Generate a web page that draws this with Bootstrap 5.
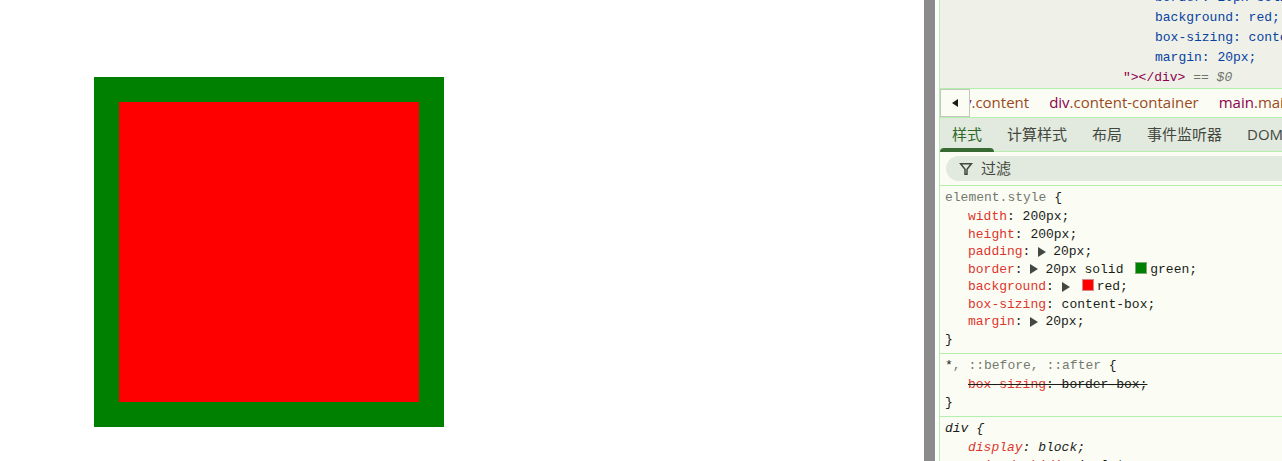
<!DOCTYPE html>
<html lang="zh-CN">
<head>
<meta charset="utf-8">
<meta name="viewport" content="width=device-width, initial-scale=1">
<title>box-sizing</title>
<link href="https://cdn.jsdelivr.net/npm/bootstrap@5.3.0/dist/css/bootstrap.min.css" rel="stylesheet">
<style>
  :root { --line: #b4efae; --panel: #fbfdf5; --tint: #e2e9de; --prop: #dc362e; --tag: #8e004b; --ink: #1a1c18; }
  body { font-family: "Open Sans", "Noto Sans CJK SC", sans-serif; font-size: 15px; }
  .page-view { padding: 77px 94px; }
  .demo-box { width: 350px; height: 350px; background: red; border: 25px solid green; }
  .splitter { width: 11px; background: #8b8b8b; margin-right: 4px; }
  .devtools { width: 343px; background: var(--panel); border-left: 1px solid var(--line); color: var(--ink); }
  .mono { font-family: "Liberation Mono", "Noto Sans CJK SC", monospace; font-size: 13px; white-space: nowrap; }
  .source { height: 88px; background: #eff1e9; color: #0842a0; line-height: 20px; }
  .source .attr-lines { padding-left: 215px; }
  .source .close-line { padding-left: 183px; color: var(--tag); }
  .source i { color: #6f746c; }
  .strip { border-top: 1px solid var(--line); height: 29px; }
  .strip a { color: #9a4a1c; white-space: nowrap; }
  .strip a span { color: var(--tag); }
  .scroll-btn { width: 30px; height: 28px; background: var(--panel); border: 1px solid #c3c8be; z-index: 1; }
  .crumbs { gap: 20px; margin-left: -19px; padding-bottom: 2px; }
  .tab-bar { height: 35px; background: var(--tint); border-top: 1px solid var(--line); border-bottom: 1px solid var(--line); }
  .tab-bar button { padding: 0 12px; color: #43483f; white-space: nowrap; line-height: 33px; }
  .tab-bar { gap: 1px; }
  .tab-bar button.active { color: #2f6a2b; position: relative; }
  .tab-bar button.active::after { content: ""; position: absolute; left: 0; right: 0; bottom: -1px; height: 4px; background: #386a33; border-radius: 4px 4px 0 0; }
  .filter-row { height: 33px; padding: 4px 0 4px 6px; }
  .filter-box { background: var(--tint); border-radius: 13px 0 0 13px; padding-left: 13px; gap: 8px; }
  .filter-box input { color: #43483f; outline: 0; min-width: 0; }
  .filter-box input::placeholder { color: #43483f; opacity: 1; }
  .rule { border-top: 1px solid var(--line); padding: 2px 0 4px 5px; }
  .selector { line-height: 20px; }
  .dim { color: #74796f; }
  .decls { padding-left: 23px; line-height: 18px; }
  .decls.full { display: grid; height: 123px; grid-template-rows: repeat(7, minmax(0, 1fr)); }
  .decls b { font-weight: 400; color: var(--prop); }
  .brace { line-height: 18px; }
  .tri { width: 8px; height: 10px; margin-right: 7px; fill: #444843; }
  .swatch { display: inline-block; width: 12px; height: 12px; vertical-align: -1px; margin: 0 3px 0 4px; border: 1px solid #8a9e86; }
  .swatch.is-red { background: red; border-color: #d98a86; margin-left: 5px; }
  .swatch.is-green { background: green; border-color: #7fa97a; }
</style>
</head>
<body>
<div class="d-flex vh-100 overflow-hidden">
  <main class="page-view flex-grow-1 bg-white"><div class="demo-box"></div></main>
  <div class="splitter flex-shrink-0"></div>
  <aside class="devtools flex-shrink-0 d-flex flex-column overflow-hidden">
    <div class="source mono d-flex flex-column justify-content-end overflow-hidden flex-shrink-0">
      <div class="attr-lines">border: 20px solid green;</div>
      <div class="attr-lines">background: red;</div>
      <div class="attr-lines">box-sizing: content-box;</div>
      <div class="attr-lines">margin: 20px;</div>
      <div class="close-line">"&gt;&lt;/div&gt; <i>== $0</i></div>
    </div>
    <nav class="strip d-flex flex-shrink-0 align-items-center" aria-label="DOM">
      <button class="scroll-btn p-0 d-flex flex-shrink-0 align-items-center justify-content-center" type="button" aria-label="向左滚动"><svg width="6" height="8" viewBox="0 0 6 8"><path d="M6 0v8L0 4z" fill="#1a1c18"/></svg></button>
      <div class="crumbs d-flex">
        <a class="text-decoration-none" href="#"><span>div</span>.content</a>
        <a class="text-decoration-none" href="#"><span>div</span>.content-container</a>
        <a class="text-decoration-none" href="#"><span>main</span>.main</a>
      </div>
    </nav>
    <div class="tab-bar d-flex flex-shrink-0" role="tablist">
      <button class="active border-0 bg-transparent" type="button" role="tab">样式</button>
      <button class="border-0 bg-transparent" type="button" role="tab">计算样式</button>
      <button class="border-0 bg-transparent" type="button" role="tab">布局</button>
      <button class="border-0 bg-transparent" type="button" role="tab">事件监听器</button>
      <button class="border-0 bg-transparent" type="button" role="tab">DOM 断点</button>
    </div>
    <div class="filter-row flex-shrink-0">
      <label class="filter-box d-flex align-items-center h-100">
        <svg class="flex-shrink-0" width="14" height="14" viewBox="0 0 14 14" fill="none" stroke="#43483f" stroke-width="1.5"><path d="M1.6 1.8h10.8L8 7.2v5H6v-5z"/></svg>
        <input class="border-0 bg-transparent p-0 flex-grow-1" type="text" placeholder="过滤" aria-label="过滤">
      </label>
    </div>
    <section class="rule mono">
      <div class="selector"><span class="dim">element.style</span> {</div>
      <div class="decls full">
        <div><b>width</b>: 200px;</div>
        <div><b>height</b>: 200px;</div>
        <div><b>padding</b>: <svg class="tri" viewBox="0 0 8 10"><path d="M0 0v10l8-5z"/></svg>20px;</div>
        <div><b>border</b>: <svg class="tri" viewBox="0 0 8 10"><path d="M0 0v10l8-5z"/></svg>20px solid <span class="swatch is-green"></span>green;</div>
        <div><b>background</b>: <svg class="tri" viewBox="0 0 8 10"><path d="M0 0v10l8-5z"/></svg><span class="swatch is-red"></span>red;</div>
        <div><b>box-sizing</b>: content-box;</div>
        <div><b>margin</b>: <svg class="tri" viewBox="0 0 8 10"><path d="M0 0v10l8-5z"/></svg>20px;</div>
      </div>
      <div class="brace">}</div>
    </section>
    <section class="rule mono">
      <div class="selector">*<span class="dim">, ::before, ::after</span> {</div>
      <div class="decls"><s><b>box-sizing</b>: border-box;</s></div>
      <div class="brace">}</div>
    </section>
    <section class="rule mono fst-italic">
      <div class="selector">div {</div>
      <div class="decls"><div><b>display</b>: block;</div><div><b>unicode-bidi</b>: isolate;</div></div>
      <div class="brace">}</div>
    </section>
  </aside>
</div>
<script src="https://cdn.jsdelivr.net/npm/bootstrap@5.3.0/dist/js/bootstrap.bundle.min.js"></script>
</body>
</html>
